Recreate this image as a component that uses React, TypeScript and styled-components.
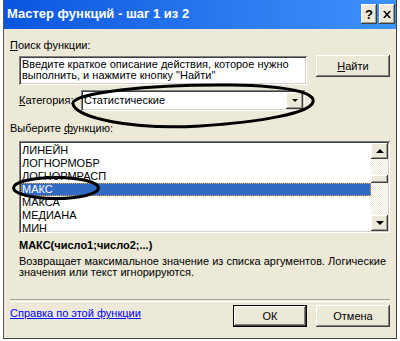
import { FC } from 'react';
import styled, { createGlobalStyle } from 'styled-components';

const FACE = '#ECE9D8';
const FONT = `"Liberation Sans", Arial, sans-serif`;

const functions = ['ЛИНЕЙН', 'ЛОГНОРМОБР', 'ЛОГНОРМРАСП', 'МАКС', 'МАКСА', 'МЕДИАНА', 'МИН'];
const selected = 'МАКС';

const GlobalStyle = createGlobalStyle`
  html, body {
    margin: 0;
    padding: 0;
    background: #fff;
  }
  body {
    font-family: ${FONT};
    font-size: 11px;
    color: #000;
  }
`;

const App: FC = () => {
  return (
    <Page>
      <GlobalStyle />
      <Window>
        <TitleBar>
          <TitleText>Мастер функций - шаг 1 из 2</TitleText>
          <TitleButtons>
            <TitleButton>?</TitleButton>
            <TitleButton>
              <svg width="8" height="7" viewBox="0 0 8 7">
                <path d="M0 0h2l2 2.5L6 0h2L5 3.5 8 7H6L4 4.5 2 7H0l3-3.5z" fill="#000" />
              </svg>
            </TitleButton>
          </TitleButtons>
        </TitleBar>

        <DialogBody>
          <Label>
            <u>П</u>оиск функции:
          </Label>

          <SearchRow>
            <SearchBox>
              Введите краткое описание действия, которое нужно выполнить, и нажмите кнопку "Найти"
            </SearchBox>
            <PushButton>
              <u>Н</u>айти
            </PushButton>
          </SearchRow>

          <CategoryRow>
            <CategoryLabel>
              <u>К</u>атегория:
            </CategoryLabel>
            <Combo>
              <ComboValue>Статистические</ComboValue>
              <ArrowButton $small>
                <Triangle $dir="down" $size={3} />
              </ArrowButton>
            </Combo>
          </CategoryRow>

          <Label $top={11}>
            Выберите <u>ф</u>ункцию:
          </Label>

          <ListBox>
            <ListItems>
              {functions.map(name => (
                <ListItem key={name} $active={name === selected}>
                  {name}
                </ListItem>
              ))}
            </ListItems>
            <ScrollBar>
              <ArrowButton>
                <Triangle $dir="up" $size={4} />
              </ArrowButton>
              <Track>
                <Thumb />
              </Track>
              <ArrowButton>
                <Triangle $dir="down" $size={4} />
              </ArrowButton>
            </ScrollBar>
          </ListBox>

          <Signature>МАКС(число1;число2;...)</Signature>
          <Description>
            Возвращает максимальное значение из списка аргументов. Логические
            <br />
            значения или текст игнорируются.
          </Description>

          <Separator />

          <BottomRow>
            <HelpLink href="#">Справка по этой функции</HelpLink>
            <Buttons>
              <PushButton $default>ОК</PushButton>
              <PushButton>Отмена</PushButton>
            </Buttons>
          </BottomRow>
        </DialogBody>
      </Window>

      {/* hand-drawn marks over the screenshot */}
      <Marks width="400" height="341" viewBox="0 0 400 341">
        <path
          d="M73 104 C70 93 150 84 232 85 C290 86 316 93 313 102 C310 113 262 122 200 126 C132 130 76 118 73 104 Z"
          fill="none"
          stroke="#000"
          strokeWidth="3"
        />
        <ellipse cx="56" cy="188" rx="42.5" ry="10.5" fill="none" stroke="#000" strokeWidth="3" />
      </Marks>
    </Page>
  );
};

const raised = `
  background: ${FACE};
  box-shadow: inset -1px -1px #404040, inset 1px 1px #fff, inset -2px -2px #a09d90;
`;

const sunken = `
  background: #fff;
  box-shadow: inset 1px 1px #808080, inset -1px -1px #fff, inset 2px 2px #404040, inset -2px -2px #d4d0c8;
`;

const Page = styled.div`
  position: relative;
  width: 400px;
  height: 341px;
  overflow: hidden;
`;

const Marks = styled.svg`
  position: absolute;
  left: 0;
  top: 0;
  pointer-events: none;
`;

const Window = styled.div`
  margin-left: 3px;
  width: 394px;
  height: 339px;
  box-sizing: border-box;
  background: ${FACE};
  border-left: 1px solid #5a5a5a;
  border-right: 1px solid #404040;
  border-bottom: 1px solid #404040;
  display: flex;
  flex-direction: column;
`;

const TitleBar = styled.div`
  height: 29px;
  flex-shrink: 0;
  display: flex;
  align-items: flex-start;
  justify-content: space-between;
  background: linear-gradient(90deg, #0a55e0 0%, #2a78ee 55%, #3d92fb 100%);
  padding: 0 1px 0 3px;
`;

const TitleText = styled.div`
  font-family: ${FONT};
  font-weight: bold;
  font-size: 13px;
  line-height: 15px;
  margin-top: 6px;
  color: #fff;
`;

const TitleButtons = styled.div`
  display: flex;
  gap: 2px;
  margin-top: 4px;
`;

const TitleButton = styled.div`
  ${raised}
  width: 16px;
  height: 20px;
  box-sizing: border-box;
  display: flex;
  align-items: center;
  justify-content: center;
  font-family: ${FONT};
  font-weight: bold;
  font-size: 13px;
  color: #000;
`;

const DialogBody = styled.div`
  display: flex;
  flex-direction: column;
  padding: 0 6px;
`;

const Label = styled.div<{ $top?: number }>`
  margin-top: ${p => p.$top ?? 10}px;
  line-height: 13px;
  height: 13px;
`;

const SearchRow = styled.div`
  display: flex;
  align-items: flex-start;
  margin-top: 3px;
  padding-left: 9px;
  height: 30px;
`;

const SearchBox = styled.div`
  ${sunken}
  margin-top: 1px;
  width: 288px;
  height: 29px;
  box-sizing: border-box;
  padding: 3px 4px 0 3px;
  line-height: 11px;
`;

const PushButton = styled.div<{ $default?: boolean }>`
  width: 74px;
  height: 22px;
  box-sizing: border-box;
  margin-left: 9px;
  display: flex;
  align-items: center;
  justify-content: center;
  background: ${FACE};
  border: ${p => (p.$default ? '1px solid #000' : 'none')};
  box-shadow: inset -1px -1px #404040, inset 1px 1px #fff, inset -2px -2px #808080;
  font-size: 11px;
`;

const CategoryRow = styled.div`
  display: flex;
  align-items: center;
  margin-top: 5px;
  padding-left: 9px;
  height: 21px;
`;

const CategoryLabel = styled.div`
  width: 62px;
  line-height: 13px;
`;

const Combo = styled.div`
  ${sunken}
  width: 224px;
  height: 21px;
  box-sizing: border-box;
  padding: 2px;
  display: flex;
  align-items: center;
`;

const ComboValue = styled.div`
  flex: 1;
  padding-left: 1px;
  line-height: 13px;
`;

const ArrowButton = styled.div<{ $small?: boolean }>`
  ${raised}
  width: 17px;
  height: ${p => (p.$small ? 17 : 16)}px;
  flex-shrink: 0;
  box-sizing: border-box;
  display: flex;
  align-items: center;
  justify-content: center;
`;

const Triangle = styled.div<{ $dir: 'up' | 'down'; $size: number }>`
  width: 0;
  height: 0;
  border-left: ${p => p.$size}px solid transparent;
  border-right: ${p => p.$size}px solid transparent;
  ${p =>
    p.$dir === 'up'
      ? `border-bottom: ${p.$size}px solid #000;`
      : `border-top: ${p.$size}px solid #000;`}
`;

const ListBox = styled.div`
  ${sunken}
  margin: 6px 0 0 9px;
  width: 371px;
  height: 92px;
  box-sizing: border-box;
  padding: 2px;
  display: flex;
`;

const ListItems = styled.div`
  flex: 1;
  display: flex;
  flex-direction: column;
  padding-top: 1px;
`;

const ListItem = styled.div<{ $active?: boolean }>`
  height: 13px;
  line-height: 13px;
  padding-left: 1px;
  box-sizing: border-box;
  color: ${p => (p.$active ? '#fff' : '#000')};
  background: ${p => (p.$active ? '#316ac5' : 'transparent')};
  outline: ${p => (p.$active ? '1px dotted #e8a040' : 'none')};
  outline-offset: -1px;
`;

const ScrollBar = styled.div`
  width: 17px;
  display: flex;
  flex-direction: column;
`;

const Track = styled.div`
  flex: 1;
  background: repeating-conic-gradient(#fff 0 25%, ${FACE} 0 50%) 0 0 / 2px 2px;
  padding-top: 16px;
`;

const Thumb = styled.div`
  ${raised}
  height: 8px;
`;

const Signature = styled.div`
  margin: 6px 0 0 9px;
  font-weight: bold;
  line-height: 13px;
`;

const Description = styled.div`
  margin: 4px 0 0 9px;
  line-height: 11px;
`;

const Separator = styled.div`
  margin-top: 21px;
  height: 1px;
  border-top: 1px solid #aca899;
  border-bottom: 1px solid #fff;
`;

const BottomRow = styled.div`
  display: flex;
  align-items: flex-start;
  justify-content: space-between;
  margin-top: 3px;
`;

const HelpLink = styled.a`
  margin-top: 2px;
  line-height: 13px;
  color: #0000ff;
  text-decoration: underline;
`;

const Buttons = styled.div`
  display: flex;
`;

export default App;
